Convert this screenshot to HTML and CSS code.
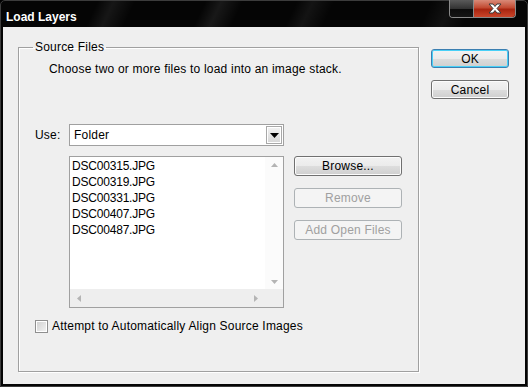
FILE: index.html
```html
<!DOCTYPE html>
<html lang="en">
<head>
    <meta charset="UTF-8">
    <title>Load Layers</title>
    <link rel="stylesheet" href="styles.css">
</head>
<body>
    <div class="window">
        <div class="titlebar">
            <span class="title">Load Layers</span>
            <div class="caption">
                <span class="cap-min"></span>
                <span class="cap-close">
                    <svg width="16" height="11" viewBox="0 0 16 11">
                        <path d="M2 1 L6 1 L8 3.5 L10 1 L14 1 L10 5.5 L14 10 L10 10 L8 7.5 L6 10 L2 10 L6 5.5 Z" fill="#fff" stroke="#3a3a3a" stroke-width="1"/>
                    </svg>
                </span>
            </div>
        </div>
        <div class="client">
            <fieldset class="group">
                <legend>Source Files</legend>
                <p class="hint">Choose two or more files to load into an image stack.</p>
                <div class="use-row">
                    <span class="use-label">Use:</span>
                    <div class="select">
                        <span class="select-value">Folder</span>
                        <span class="select-drop">
                            <svg width="9" height="5" viewBox="0 0 9 5"><path d="M0 0 H9 L4.5 5 Z" fill="#000"/></svg>
                        </span>
                    </div>
                </div>
                <div class="files-row">
                    <div class="listbox">
                        <div class="list-main">
                            <ul class="items">
                                <li>DSC00315.JPG</li>
                                <li>DSC00319.JPG</li>
                                <li>DSC00331.JPG</li>
                                <li>DSC00407.JPG</li>
                                <li>DSC00487.JPG</li>
                            </ul>
                            <div class="vscroll">
                                <svg width="7" height="4" viewBox="0 0 7 4"><path d="M0 4 L3.5 0 L7 4 Z" fill="#b4b4b4"/></svg>
                                <svg width="7" height="4" viewBox="0 0 7 4"><path d="M0 0 L3.5 4 L7 0 Z" fill="#b4b4b4"/></svg>
                            </div>
                        </div>
                        <div class="hscroll">
                            <svg width="4" height="7" viewBox="0 0 4 7"><path d="M4 0 L0 3.5 L4 7 Z" fill="#b4b4b4"/></svg>
                            <svg width="4" height="7" viewBox="0 0 4 7"><path d="M0 0 L4 3.5 L0 7 Z" fill="#b4b4b4"/></svg>
                        </div>
                    </div>
                    <div class="side-buttons">
                        <button class="btn">Browse...</button>
                        <button class="btn" disabled>Remove</button>
                        <button class="btn" disabled>Add Open Files</button>
                    </div>
                </div>
                <label class="check">
                    <span class="check-box"></span>
                    <span>Attempt to Automatically Align Source Images</span>
                </label>
            </fieldset>
            <div class="dialog-buttons">
                <button class="btn btn-default">OK</button>
                <button class="btn">Cancel</button>
            </div>
        </div>
    </div>
</body>
</html>
```

FILE: styles.css
```css
body {
    margin: 0;
    background: #000;
    font-family: 'Liberation Sans', Arial, sans-serif;
    font-size: 12px;
    letter-spacing: 0.2px;
    color: #000;
}
.window {
    width: 528px;
    height: 387px;
    box-sizing: border-box;
    border: 1px solid #3c3c3c;
    border-radius: 5px 5px 0 0;
    padding: 0 2px 2px;
    display: flex;
    flex-direction: column;
    background:
        linear-gradient(115deg, transparent 18%, rgba(255,255,255,0.07) 21%, transparent 25%),
        linear-gradient(115deg, transparent 38%, rgba(255,255,255,0.08) 41%, transparent 45%),
        linear-gradient(115deg, transparent 55%, rgba(255,255,255,0.06) 58%, transparent 62%),
        linear-gradient(115deg, transparent 80%, rgba(255,255,255,0.05) 84%, transparent 88%),
        #050505;
    background-size: 100% 26px;
    background-repeat: no-repeat;
    background-color: #050505;
}
.titlebar {
    height: 26px;
    display: flex;
    justify-content: space-between;
    align-items: flex-start;
    flex-shrink: 0;
}
.title {
    color: #fff;
    font-weight: bold;
    font-size: 12px;
    margin: 9px 0 0 3px;
    letter-spacing: 0;
}
.caption {
    display: flex;
    margin-right: 9px;
    margin-top: -1px;
    border: 1px solid #8a8a8a;
    border-top: none;
    border-radius: 0 0 4px 4px;
    overflow: hidden;
}
.cap-min {
    width: 23px;
    height: 17px;
    background: linear-gradient(#5a5a5a, #333 50%, #0c0c0c 55%, #151515);
    border-right: 1px solid #8a8a8a;
}
.cap-close {
    width: 41px;
    height: 17px;
    background: linear-gradient(#d98a78, #c24a32 45%, #a92510 55%, #c9452a);
    display: flex;
    align-items: center;
    justify-content: center;
}
.client {
    flex: 1;
    background: #efefef;
    display: flex;
    align-items: flex-start;
    padding: 13px 0 0 15px;
    gap: 12px;
}
.group {
    margin: 0;
    padding: 0;
    width: 401px;
    height: 332px;
    box-sizing: border-box;
    border: 1px solid #a0a0a0;
    box-shadow: 1px 1px 0 #fff, inset 1px 1px 0 #fff;
}
.group legend {
    margin-left: 14px;
    padding: 0 2px;
    line-height: 14px;
}
.hint {
    margin: 8px 0 0 30px;
    line-height: 14px;
}
.use-row {
    display: flex;
    align-items: center;
    margin: 48px 0 0 16px;
}
.use-label {
    width: 34px;
}
.select {
    width: 215px;
    height: 22px;
    box-sizing: border-box;
    border: 1px solid #a0a0a0;
    background: #fff;
    display: flex;
    align-items: center;
    justify-content: space-between;
    padding: 0 1px 0 4px;
}
.select-drop {
    width: 16px;
    height: 18px;
    box-sizing: border-box;
    border: 1px solid #a8a8a8;
    box-shadow: inset 0 0 0 1px #fff;
    background: linear-gradient(#f2f2f2, #d6d6d6);
    display: flex;
    align-items: center;
    justify-content: center;
}
.files-row {
    display: flex;
    align-items: flex-start;
    margin: 10px 0 0 50px;
    gap: 10px;
}
.listbox {
    width: 215px;
    height: 152px;
    box-sizing: border-box;
    border: 1px solid #a0a0a0;
    background: #fff;
    display: flex;
    flex-direction: column;
}
.list-main {
    flex: 1;
    display: flex;
}
.items {
    flex: 1;
    list-style: none;
    margin: 0;
    padding: 1px 0 0 2px;
    letter-spacing: -0.2px;
}
.items li {
    line-height: 16px;
}
.vscroll {
    width: 18px;
    background: #fbfbfb;
    display: flex;
    flex-direction: column;
    justify-content: space-between;
    align-items: center;
    padding: 6px 0 5px;
}
.hscroll {
    height: 18px;
    background: #eeeeee;
    display: flex;
    align-items: center;
    justify-content: space-between;
    padding: 0 25px 0 7px;
}
.side-buttons {
    display: flex;
    flex-direction: column;
    gap: 12px;
}
.btn {
    font-family: inherit;
    font-size: 12px;
    letter-spacing: 0.2px;
    color: #000;
    height: 20px;
    padding: 0;
    width: 108px;
    box-sizing: border-box;
    border: 1px solid #707070;
    border-radius: 3px;
    background: linear-gradient(#f2f2f2 0%, #ebebeb 50%, #dddddd 51%, #cfcfcf 100%);
    box-shadow: inset 0 0 0 1px #fcfcfc;
}
.btn:disabled {
    color: #a0a0a0;
    border-color: #adb2b5;
    background: #f4f4f4;
    box-shadow: none;
}
.check {
    display: flex;
    align-items: center;
    gap: 4px;
    margin: 11px 0 0 16px;
}
.check-box {
    width: 13px;
    height: 13px;
    box-sizing: border-box;
    border: 1px solid #8f8f8f;
    background: linear-gradient(135deg, #cfcfcf, #f4f4f4);
    box-shadow: inset 0 0 0 1px #fff;
}
.dialog-buttons {
    display: flex;
    flex-direction: column;
    gap: 12px;
    margin-top: 9px;
}
.dialog-buttons .btn {
    width: 78px;
    height: 19px;
}
.btn-default {
    border-color: #3c7fb1;
    box-shadow: inset 0 0 0 1px #48d0f7;
}
```
